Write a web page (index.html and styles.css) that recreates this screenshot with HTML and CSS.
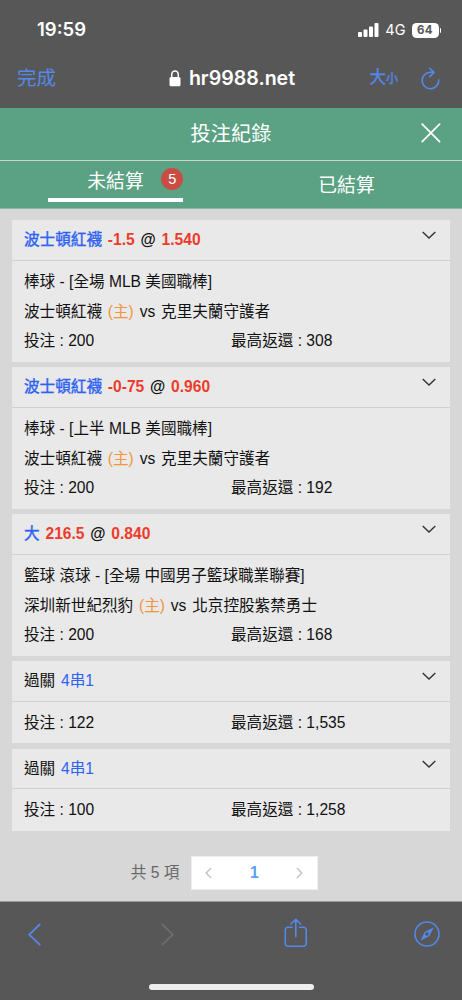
FILE: index.html
```html
<!DOCTYPE html>
<html lang="zh-Hant">
<head>
<meta charset="utf-8">
<meta name="viewport" content="width=device-width, initial-scale=1">
<title>投注紀錄</title>
<link rel="stylesheet" href="styles.css">
</head>
<body>
<div class="phone">
  <div class="status">
    <span class="time">19:59</span>
    <span class="signals">
      <svg class="bars" width="21" height="14" viewBox="0 0 21 14"><rect x="0" y="9" width="4" height="5" rx="1"/><rect x="5.5" y="6.5" width="4" height="7.500" rx="1"/><rect x="11" y="3.500" width="4" height="10.500" rx="1"/><rect x="16.500" y="0" width="4" height="14" rx="1"/></svg>
      <span class="net">4G</span>
      <span class="battery">64</span><i class="nub"></i>
    </span>
  </div>
  <div class="browser">
    <span class="done">完成</span>
    <div class="address">
      <svg width="12" height="17" viewBox="0 0 12 17"><path d="M2.700 8V4.700a3.300 3.700 0 0 1 6.600 0V8" fill="none" stroke="#fff" stroke-width="1.500"/><rect x=".5" y="7" width="11" height="9.300" rx="1.500" fill="#fff"/></svg>
      <span>hr9988.net</span>
    </div>
    <div class="tools">
      <span class="size">大<small>小</small></span>
      <svg width="19" height="23" viewBox="0 0 19 23" fill="none" stroke="#5488ea" stroke-width="1.600" stroke-linecap="round" stroke-linejoin="round"><path d="M12.500 5.200H10A8.300 8.300 0 1 0 17.700 13M8.700 1.200l4.300 4.200-4.300 4.200"/></svg>
    </div>
  </div>
  <header class="title">
    <h1>投注紀錄</h1>
    <svg class="close" width="20" height="20" viewBox="0 0 20 20"><path d="M1.200 1.200l17.400 17.400M18.600 1.200L1.200 18.600" stroke="#fff" stroke-width="1.700" stroke-linecap="round"/></svg>
  </header>
  <nav class="tabs">
    <div class="tab active"><span class="tab-label">未結算<b class="badge">5</b></span></div>
    <div class="tab"><span class="tab-label">已結算</span></div>
  </nav>
  <main class="list">
    <article class="card">
      <div class="head bold"><p><span class="blue">波士頓紅襪</span> <span class="red">-1.5</span> @ <span class="red">1.540</span></p><svg class="chev" width="14" height="9" viewBox="0 0 14 9"><path d="M.7 1l6.300 6 6.300-6"/></svg></div>
      <div class="body"><p>棒球 - [全場 MLB 美國職棒]</p><p class="teams">波士頓紅襪 <span class="home">(主)</span> vs 克里夫蘭守護者</p><p class="stake"><span>投注 : 200</span><span>最高返還 : 308</span></p></div>
    </article>
    <article class="card">
      <div class="head bold"><p><span class="blue">波士頓紅襪</span> <span class="red">-0-75</span> @ <span class="red">0.960</span></p><svg class="chev" width="14" height="9" viewBox="0 0 14 9"><path d="M.7 1l6.300 6 6.300-6"/></svg></div>
      <div class="body"><p>棒球 - [上半 MLB 美國職棒]</p><p class="teams">波士頓紅襪 <span class="home">(主)</span> vs 克里夫蘭守護者</p><p class="stake"><span>投注 : 200</span><span>最高返還 : 192</span></p></div>
    </article>
    <article class="card">
      <div class="head bold"><p><span class="blue">大</span> <span class="red">216.5</span> @ <span class="red">0.840</span></p><svg class="chev" width="14" height="9" viewBox="0 0 14 9"><path d="M.7 1l6.300 6 6.300-6"/></svg></div>
      <div class="body"><p>籃球 滾球 - [全場 中國男子籃球職業聯賽]</p><p class="teams">深圳新世紀烈豹 <span class="home">(主)</span> vs 北京控股紫禁勇士</p><p class="stake"><span>投注 : 200</span><span>最高返還 : 168</span></p></div>
    </article>
    <article class="card parlay">
      <div class="head"><p>過關 <span class="blue">4串1</span></p><svg class="chev" width="14" height="9" viewBox="0 0 14 9"><path d="M.7 1l6.300 6 6.300-6"/></svg></div>
      <div class="body"><p class="stake"><span>投注 : 122</span><span>最高返還 : 1,535</span></p></div>
    </article>
    <article class="card parlay">
      <div class="head"><p>過關 <span class="blue">4串1</span></p><svg class="chev" width="14" height="9" viewBox="0 0 14 9"><path d="M.7 1l6.300 6 6.300-6"/></svg></div>
      <div class="body"><p class="stake"><span>投注 : 100</span><span>最高返還 : 1,258</span></p></div>
    </article>
    <div class="pagination">
      <span class="total">共 5 項</span>
      <div class="pager">
        <svg width="7" height="12" viewBox="0 0 7 12"><path d="M6 1L1.200 6 6 11"/></svg>
        <b>1</b>
        <svg width="7" height="12" viewBox="0 0 7 12"><path d="M1 1l4.800 5L1 11"/></svg>
      </div>
    </div>
  </main>
  <footer class="toolbar">
    <div class="actions">
      <svg width="13" height="23" viewBox="0 0 13 23" fill="none" stroke="#5488ea" stroke-width="1.800" stroke-linecap="round" stroke-linejoin="round"><path d="M11.700 1.500L1.200 11.700l10.500 10"/></svg>
      <svg class="forward" width="13" height="23" viewBox="0 0 13 23" fill="none" stroke="#6d6d6d" stroke-width="1.800" stroke-linecap="round" stroke-linejoin="round"><path d="M1.300 1.500l10.500 10.200-10.500 10"/></svg>
      <svg class="share" width="24" height="30" viewBox="0 0 24 30" fill="none" stroke="#5488ea" stroke-width="1.600" stroke-linecap="round" stroke-linejoin="round"><path d="M8 9.300H4a2.700 2.700 0 0 0-2.700 2.700v13.500a2.700 2.700 0 0 0 2.700 2.700h15.500a2.700 2.700 0 0 0 2.700-2.700V12a2.700 2.700 0 0 0-2.700-2.700h-4M11.800 18.700V1.500M7 6l4.800-4.700L16.600 6"/></svg>
      <svg class="compass" width="26" height="26" viewBox="0 0 26 26"><circle cx="13" cy="13" r="12" fill="none" stroke="#5488ea" stroke-width="1.600"/><path fill="#5488ea" fill-rule="evenodd" d="M19.800 6.200L15.500 15l-9 4.800L10.600 11zM13 11.200a1.800 1.800 0 1 0 0 3.600 1.800 1.800 0 0 0 0-3.600z"/></svg>
    </div>
    <div class="indicator"></div>
  </footer>
</div>
</body>
</html>
```
FILE: styles.css
```css
* { box-sizing: border-box; }
body { margin: 0; background: #575757; color: #111; font: 15.6px/29.4px "Liberation Sans", "Noto Sans CJK TC", sans-serif; }
p, h1 { margin: 0; }
svg { display: block; flex: none; }
.phone { width: 462px; height: 1000px; display: flex; flex-direction: column; overflow: hidden; }
.status { height: 52px; padding: 8px 21px 0 37px; display: flex; align-items: center; justify-content: space-between; color: #fff; font-family: Inter, sans-serif; }
.time { font-size: 18.5px; font-weight: 600; }
.signals { display: flex; align-items: center; }
.bars { fill: #fff; }
.net { font-size: 14.5px; margin-left: 6px; }
.battery { margin-left: 6px; width: 27px; height: 15px; border-radius: 4.5px; background: #fff; color: #575757; font-size: 11.5px; font-weight: 700; line-height: 15px; text-align: center; letter-spacing: .3px; }
.nub { width: 1.5px; height: 5px; margin-left: 1px; background: #fff; border-radius: 0 2px 2px 0; }
.browser { height: 56px; padding: 0 22px 4px 17px; display: grid; grid-template-columns: 1fr auto 1fr; align-items: center; color: #5488ea; }
.done { font-size: 19.5px; padding-top: 2px; }
.address { display: flex; align-items: center; gap: 8px; margin-left: 7px; color: #fff; font: 600 19.6px/24px Inter, sans-serif; }
.tools { display: flex; align-items: center; justify-content: flex-end; gap: 23px; }
.size { font-size: 16.5px; padding-top: 2px; -webkit-text-stroke: .4px #5488ea; }
.size small { font-size: 12px; }
.title { position: relative; height: 53px; display: flex; align-items: center; justify-content: center; padding-top: 2px; background: #5ba284; border-bottom: 1px solid #c8d8d0; color: #fff; }
.title h1 { font-size: 20.2px; font-weight: 400; }
.close { position: absolute; right: 21px; top: 15px; }
.tabs { height: 48px; display: grid; grid-template-columns: 1fr 1fr; background: #5ba284; border-bottom: 1px solid #8fb5a3; color: #fff; font-size: 18.8px; }
.tab { display: flex; justify-content: center; padding-top: 10px; }
.tab.active { width: 135px; height: 41px; margin-left: 48px; padding-top: 6px; border-bottom: 4px solid #fff; }
.tab-label { position: relative; }
.badge { position: absolute; left: 74px; top: 1px; width: 22px; height: 22px; border-radius: 50%; background: #c94d43; font-size: 14.5px; font-weight: 400; line-height: 22px; text-align: center; }
.list { height: 693px; padding: 11.3px 12px 0; background: #d7d7d7; border-bottom: 1px solid #969696; }
.card { height: 141.4px; margin-bottom: 5.6px; background: #e9e9e9; }
.head { height: 40.6px; padding: 0 14px 0 12px; display: flex; justify-content: space-between; line-height: 39px; border-bottom: 1.4px solid #d0d0d0; word-spacing: 1.5px; }
.bold { font-weight: 700; }
.blue { color: #2e62f2; }
.bold .blue { font-weight: 400; -webkit-text-stroke: .4px #2e62f2; }
.red { color: #ee3b2b; }
.chev { margin-top: 11px; fill: none; stroke: #333; stroke-width: 1.4; }
.body { padding: 6.3px 12px; }
.teams { word-spacing: 1.5px; }
.home { color: #f2953c; }
.stake { display: grid; grid-template-columns: 1fr 1fr; }
.parlay { height: 82px; }
.parlay .body { padding-top: 6px; }
.pagination { margin-top: 25px; display: flex; align-items: center; justify-content: center; gap: 12px; padding-right: 13px; color: #666; }
.pager { width: 127px; height: 34px; padding: 0 14px 0 13px; display: flex; align-items: center; justify-content: space-between; background: #fff; border: 1px solid #eee; }
.pager b { color: #58a0f8; }
.pager svg { fill: none; stroke: #c0c2c6; stroke-width: 1.4; }
.toolbar { height: 98px; display: flex; flex-direction: column; align-items: center; }
.actions { width: 100%; height: 64px; padding: 0 22px 0 28px; display: flex; align-items: center; }
.forward { margin-left: 120px; }
.share { margin: -3px 0 0 110px; }
.compass { margin-left: auto; }
.indicator { margin-top: 18px; width: 165px; height: 6px; border-radius: 3px; background: #eee; }
```
